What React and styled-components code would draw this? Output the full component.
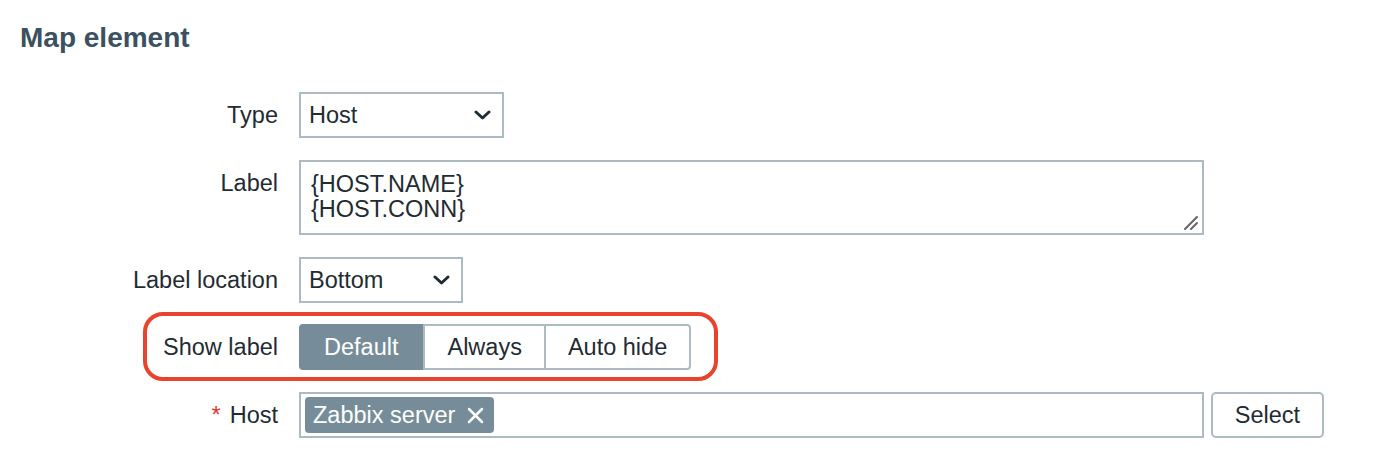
import React from "react";
import styled, {createGlobalStyle} from "styled-components";

const Global = createGlobalStyle`
body {
margin: 0;
background: #ffffff;
font-family: "Liberation Sans", Arial, sans-serif;
color: #1f2c33;
}
`;

const Page = styled.div`
padding: 22px 0 0 0;
`;

const Title = styled.h2`
margin: 0 0 38px 20px;
font-size: 28px;
line-height: 32px;
font-weight: bold;
color: #3b5060;
`;

const Form = styled.div`
display: flex;
flex-direction: column;
gap: 22px;
`;

const Row = styled.div`
position: relative;
display: grid;
grid-template-columns: 278px auto;
column-gap: 21px;
align-items: start;
margin-top: ${props => props.$shift || 0}px;
`;

const Label = styled.div`
text-align: right;
font-size: 23.5px;
line-height: 46px;
white-space: nowrap;
`;

const Required = styled.span`
color: #e33734;
margin-right: 9px;
`;

const SelectBox = styled.div`
box-sizing: border-box;
width: ${props => props.$width}px;
height: 46px;
border: 2px solid #acbbc2;
display: flex;
align-items: center;
justify-content: space-between;
padding: 0 11px 0 8px;
font-size: 23.5px;
background: #fff;
`;

const TextArea = styled.textarea`
box-sizing: border-box;
display: block;
width: 905px;
height: 75px;
margin: 0;
border: 2px solid #acbbc2;
padding: 10px 10px 0 10px;
font-family: "Liberation Sans", Arial, sans-serif;
font-size: 23.5px;
line-height: 25px;
color: #1f2c33;
resize: none;
overflow: hidden;
outline: none;
`;

const AreaWrap = styled.div`
position: relative;
width: 905px;
`;

const Grip = styled.svg`
position: absolute;
right: 6px;
bottom: 5px;
`;

const Segmented = styled.div`
display: inline-flex;
height: 46px;
justify-self: start;
`;

const Segment = styled.div`
box-sizing: border-box;
display: flex;
align-items: center;
padding: 0 22px;
font-size: 23.5px;
border: 2px solid ${props => props.$active ? "#768d99" : "#acbbc2"};
background: ${props => props.$active ? "#768d99" : "#fff"};
color: ${props => props.$active ? "#fff" : "#1f2c33"};
&:first-child {
  padding: 0 23px;
  border-radius: 4px 0 0 4px;
}
&:nth-child(n+3) {
  margin-left: -2px;
}
&:last-child {
  border-radius: 0 4px 4px 0;
}
`;

const Highlight = styled.div`
position: absolute;
left: 143px;
top: -12px;
width: 575px;
height: 69px;
box-sizing: border-box;
border: 4px solid #e8432c;
border-radius: 20px;
pointer-events: none;
`;

const HostLine = styled.div`
display: flex;
gap: 7px;
`;

const MultiSelect = styled.div`
box-sizing: border-box;
width: 905px;
height: 46px;
border: 2px solid #acbbc2;
padding: 4px;
display: flex;
align-items: center;
`;

const Tag = styled.div`
display: flex;
align-items: center;
gap: 12px;
height: 36px;
padding: 0 10px 0 8px;
border-radius: 4px;
background: #768d99;
color: #fff;
font-size: 23.5px;
`;

const Button = styled.div`
box-sizing: border-box;
width: 113px;
height: 46px;
border: 2px solid #acbbc2;
border-radius: 5px;
display: flex;
align-items: center;
justify-content: center;
font-size: 23.5px;
background: #fff;
`;

const Chevron = () => (
    <svg width="17" height="10" viewBox="0 0 17 10">
        <path d="M2 2 L8.5 8 L15 2" fill="none" stroke="#1f2c33" strokeWidth="3" strokeLinecap="round" strokeLinejoin="round"/>
    </svg>
);

const Cross = () => (
    <svg width="17" height="17" viewBox="0 0 17 17">
        <path d="M2 2 L15 15 M15 2 L2 15" fill="none" stroke="#fff" strokeWidth="2.5" strokeLinecap="round"/>
    </svg>
);

export default function App() {
    return <Page>
        <Global/>
        <Title>Map element</Title>
        <Form>
            <Row>
                <Label>Type</Label>
                <SelectBox $width={205}>Host<Chevron/></SelectBox>
            </Row>
            <Row>
                <Label>Label</Label>
                <AreaWrap>
                    <TextArea defaultValue={"{HOST.NAME}\n{HOST.CONN}"} spellCheck={false}/>
                    <Grip width="14" height="14" viewBox="0 0 14 14">
                        <path d="M1 13 L13 1 M7 13 L13 7" stroke="#666" strokeWidth="2" strokeLinecap="round"/>
                    </Grip>
                </AreaWrap>
            </Row>
            <Row>
                <Label>Label location</Label>
                <SelectBox $width={164}>Bottom<Chevron/></SelectBox>
            </Row>
            <Row $shift={-1}>
                <Highlight/>
                <Label>Show label</Label>
                <Segmented>
                    <Segment $active>Default</Segment>
                    <Segment>Always</Segment>
                    <Segment>Auto hide</Segment>
                </Segmented>
            </Row>
            <Row>
                <Label><Required>*</Required>Host</Label>
                <HostLine>
                    <MultiSelect>
                        <Tag>Zabbix server<Cross/></Tag>
                    </MultiSelect>
                    <Button>Select</Button>
                </HostLine>
            </Row>
        </Form>
    </Page>;
}
